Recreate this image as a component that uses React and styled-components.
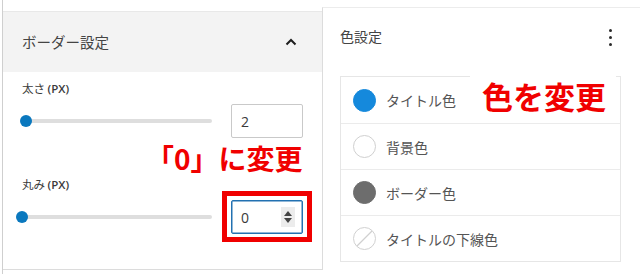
import React from 'react';
import styled, { createGlobalStyle } from 'styled-components';

const GlobalStyle = createGlobalStyle`
  html, body {
    margin: 0;
    padding: 0;
    background: #fff;
  }
  body {
    width: 640px;
    height: 274px;
    overflow: hidden;
    font-family: "Noto Sans CJK JP", "Noto Sans", sans-serif;
    color: #3c3c3c;
  }
`;

const Page = styled.div`
  display: flex;
  align-items: flex-start;
  height: 274px;
`;

// 左側：ボーダー設定パネル
const LeftColumn = styled.div`
  width: 320px;
  height: 274px;
  margin-left: 2px;
  padding-top: 11px;
  border-left: 1px solid #cfcfcf;
  box-sizing: border-box;
`;

const BorderPanel = styled.section`
  position: relative;
  height: 259px;
  box-sizing: border-box;
  border-top: 1px solid #e8e8e8;
  border-bottom: 1px solid #dcdcdc;
`;

const PanelHeader = styled.div`
  display: flex;
  align-items: center;
  justify-content: space-between;
  height: 60px;
  padding: 0 25px 0 19px;
  background: #f3f3f3;
`;

const PanelTitle = styled.h2`
  margin: 0 0 2px;
  font-size: 14.5px;
  font-weight: 400;
  color: #444;
`;

const PanelBody = styled.div`
  padding: 8px 19px 0 19px;
`;

const FieldLabel = styled.div`
  height: 16px;
  line-height: 16px;
  font-size: 11.5px;
  color: #3a3a3a;
  margin-top: ${(p) => p.$gap || 0}px;

  b {
    font-weight: 600;
    font-family: "Open Sans", "Noto Sans", sans-serif;
  }
`;

const FieldRow = styled.div`
  display: flex;
  align-items: center;
  gap: 19px;
  margin-top: 8px;
`;

const Track = styled.div`
  position: relative;
  flex: 1;
  height: 4px;
  border-radius: 2px;
  background: #dedede;
`;

const Thumb = styled.span`
  position: absolute;
  top: 50%;
  width: 12px;
  height: 12px;
  border-radius: 50%;
  background: #0a78be;
  transform: translate(-50%, -50%);
`;

const NumberBox = styled.div`
  position: relative;
  display: flex;
  align-items: center;
  justify-content: space-between;
  width: 72px;
  height: 34px;
  box-sizing: border-box;
  padding: 0 9px;
  border: 1px solid ${(p) => (p.$focused ? '#2271b1' : '#c9c9c9')};
  box-shadow: ${(p) => (p.$focused ? 'inset 0 0 0 0.5px #2271b1' : 'none')};
  border-radius: 2px;
  background: #fff;
  font-family: "Open Sans", "Noto Sans", sans-serif;
  font-size: 14px;
  color: #3a3a3a;

  /* 赤枠の注釈 */
  &::after {
    content: '';
    display: ${(p) => (p.$marked ? 'block' : 'none')};
    position: absolute;
    inset: -10px -10px -9px -10px;
    border: 5px solid #f00000;
    pointer-events: none;
  }
`;

const Spinner = styled.span`
  display: flex;
  flex-direction: column;
  align-items: center;
  justify-content: center;
  gap: 2px;
  width: 14px;
  height: 20px;
  margin-right: -2px;
  background: #ececec;
`;

const Arrow = styled.i`
  width: 0;
  height: 0;
  border-left: 4px solid transparent;
  border-right: 4px solid transparent;
  ${(p) => (p.$down ? 'border-top: 5px solid #444;' : 'border-bottom: 5px solid #444;')}
`;

const Callout = styled.div`
  position: absolute;
  left: ${(p) => p.$x}px;
  top: ${(p) => p.$y}px;
  padding: ${(p) => p.$pad || '0'};
  background: #fff;
  color: #f00000;
  font-size: ${(p) => p.$size}px;
  font-weight: 700;
  line-height: 1.2;
  white-space: nowrap;
`;

// 右側：色設定パネル
const ColorPanel = styled.section`
  position: relative;
  flex: 1;
  height: 263px;
  margin-top: 7px;
  box-sizing: border-box;
  border-top: 1px solid #ececec;
  border-left: 1px solid #dcdcdc;
`;

const ColorHeader = styled.div`
  display: flex;
  align-items: center;
  justify-content: space-between;
  height: 20px;
  padding: 18px 28px 0 17px;
`;

const ColorTitle = styled.h2`
  margin: 0;
  font-size: 14px;
  font-weight: 400;
  color: #444;
`;

const Kebab = styled.span`
  display: flex;
  flex-direction: column;
  gap: 4px;
  margin-top: 2px;

  i {
    width: 3px;
    height: 3px;
    border-radius: 50%;
    background: #2a2a2a;
  }
`;

const ColorList = styled.ul`
  list-style: none;
  margin: 30px 0 0 17px;
  padding: 0;
  width: 281px;
  border: 1px solid #e6e6e6;
  box-sizing: border-box;
`;

const ColorItem = styled.li`
  display: flex;
  align-items: center;
  gap: 10px;
  height: 46px;
  padding-left: 12px;
  box-sizing: border-box;
  font-size: 14px;
  color: #555;

  & + & {
    border-top: 1px solid #ebebeb;
  }
`;

const Swatch = styled.span`
  width: 23px;
  height: 23px;
  border-radius: 50%;
  box-sizing: border-box;
  background: ${(p) => p.$color || '#fff'};
  border: 1px solid ${(p) => (p.$color ? p.$color : '#d0d0d0')};
  flex-shrink: 0;
`;

const ChevronUp = () => (
  <svg width="12" height="8" viewBox="0 0 12 8">
    <path d="M1.5 6.5 L6 2 L10.5 6.5" fill="none" stroke="#1e1e1e" strokeWidth="2" />
  </svg>
);

const NoColor = () => (
  <svg width="23" height="23" viewBox="0 0 23 23" style={{ flexShrink: 0 }}>
    <circle cx="11.5" cy="11.5" r="11" fill="#fff" stroke="#d0d0d0" strokeWidth="1" />
    <path d="M4 19 L19 4" stroke="#d0d0d0" strokeWidth="1.2" />
  </svg>
);

const Slider = ({ value, max }) => (
  <Track>
    <Thumb style={{ left: `${(value / max) * 100}%` }} />
  </Track>
);

const colors = [
  { label: 'タイトル色', color: '#1589dc' },
  { label: '背景色' },
  { label: 'ボーダー色', color: '#6d6d6d' },
  { label: 'タイトルの下線色', none: true },
];

const App = () => (
  <>
    <GlobalStyle />
    <Page>
      <LeftColumn>
        <BorderPanel>
          <PanelHeader>
            <PanelTitle>ボーダー設定</PanelTitle>
            <ChevronUp />
          </PanelHeader>
          <PanelBody>
            <FieldLabel>
              太さ <b>(PX)</b>
            </FieldLabel>
            <FieldRow>
              <Slider value={2} max={100} />
              <NumberBox>2</NumberBox>
            </FieldRow>
            <FieldLabel $gap={38}>
              丸み <b>(PX)</b>
            </FieldLabel>
            <FieldRow>
              <Slider value={0} max={100} />
              <NumberBox $focused $marked>
                0
                <Spinner>
                  <Arrow />
                  <Arrow $down />
                </Spinner>
              </NumberBox>
            </FieldRow>
          </PanelBody>
          <Callout $x={143} $y={130} $size={28}>「0」に変更</Callout>
        </BorderPanel>
      </LeftColumn>

      <ColorPanel>
        <ColorHeader>
          <ColorTitle>色設定</ColorTitle>
          <Kebab>
            <i />
            <i />
            <i />
          </Kebab>
        </ColorHeader>
        <ColorList>
          {colors.map((c) => (
            <ColorItem key={c.label}>
              {c.none ? <NoColor /> : <Swatch $color={c.color} />}
              {c.label}
            </ColorItem>
          ))}
        </ColorList>
        <Callout $x={147} $y={63} $size={31} $pad="6px 10px 6px 12px">色を変更</Callout>
      </ColorPanel>
    </Page>
  </>
);

export default App;
